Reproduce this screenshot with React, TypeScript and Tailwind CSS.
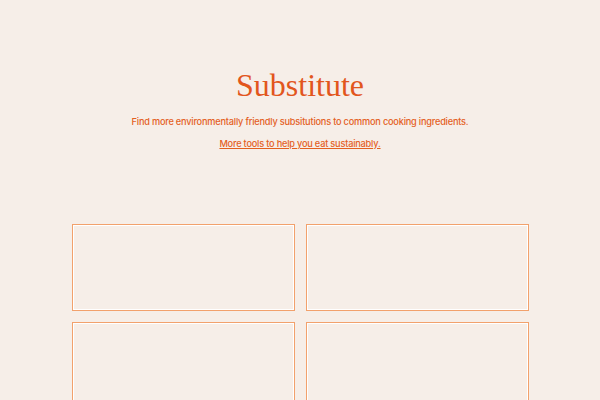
export default function App() {
  const boxes = [0, 1, 2, 3];
  return (
    <div className="min-h-[400px] h-[400px] overflow-hidden bg-[#f6eee8] text-[#e2561d]" style={{ fontFamily: 'Inter, "Liberation Sans", sans-serif' }}>
      <div className="pt-[65px] flex flex-col items-center">
        <h1 className="text-[32px] leading-[40px]" style={{ fontFamily: '"Liberation Serif", serif' }}>Substitute</h1>
        <p className="mt-[9px] text-[9.2px] leading-[16px] tracking-[-0.2px] font-medium text-[#e4601f]">Find more environmentally friendly subsitutions to common cooking ingredients.</p>
        <a href="#" className="mt-[6px] text-[9.2px] leading-[16px] tracking-[-0.2px] font-medium underline text-[#e4601f]">More tools to help you eat sustainably.</a>
      </div>
      <div className="mt-[72px] mx-auto w-[457px] grid grid-cols-2 gap-[11px]">
        {boxes.map((b) => (
          <div key={b} className="h-[87px] border border-[#f2a16c] shadow-[inset_0_0_0_1px_#fff]" />
        ))}
      </div>
    </div>
  );
}
